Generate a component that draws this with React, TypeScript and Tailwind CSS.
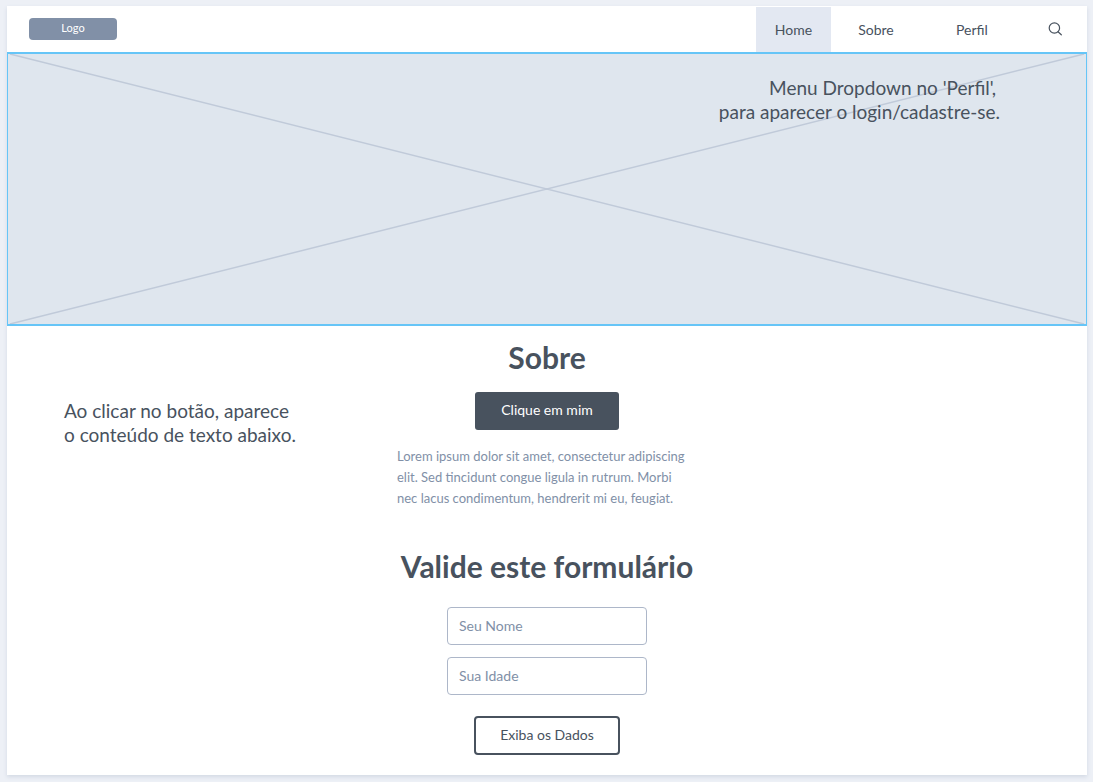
import type { ReactNode } from 'react';

function NavLink({ href, className, children }: { href: string; className: string; children: ReactNode }) {
  return (
    <a href={href} className={`flex items-center justify-center ${className}`}>
      {children}
    </a>
  );
}

function Header() {
  return (
    <header className="flex h-[46px] items-stretch justify-between">
      <a
        href="#home"
        className="mt-3 ml-[22px] flex h-[22px] w-[88px] items-center justify-center rounded bg-[#8190a7] pb-0.5 text-[11px] text-white"
      >
        Logo
      </a>
      <nav className="flex items-stretch pt-px text-sm">
        <NavLink href="#home" className="w-[75px] bg-[#e3e8f2]">Home</NavLink>
        <NavLink href="#sobre" className="w-[90px]">Sobre</NavLink>
        <NavLink href="#perfil" className="w-[102px]">Perfil</NavLink>
        <button type="button" aria-label="Buscar" className="flex w-16 items-center justify-center pb-0.5">
          <svg viewBox="0 0 14 14" className="h-3.5 w-3.5" fill="none" stroke="currentColor" strokeWidth="1.2" strokeLinecap="round">
            <circle cx="6.4" cy="6" r="5.2" />
            <path d="M10 9.8 13.3 12.8" />
          </svg>
        </button>
      </nav>
    </header>
  );
}

function Hero() {
  return (
    <section className="relative h-[274px] border-x border-y-2 border-[#66c5f7] bg-[#dfe6ee]">
      <svg
        className="absolute inset-0 h-full w-full"
        viewBox="0 0 1076 270"
        preserveAspectRatio="none"
        stroke="#c0cad9"
        strokeWidth="1.5"
        aria-hidden="true"
      >
        <path d="M2 0 1074 270M1074 0 2 270" />
      </svg>
      <p className="relative pt-[22px] pr-[86px] text-right text-[19px] leading-6">
        <span className="pr-1">Menu Dropdown no 'Perfil',</span>
        <br />
        para aparecer o login/cadastre-se.
      </p>
    </section>
  );
}

const field =
  'h-[38px] w-[200px] rounded border border-[#adb7c9] bg-white px-[11px] pb-0.5 text-sm placeholder:text-[#8190a7] placeholder:opacity-100';

export default function App() {
  return (
    <div className="min-h-screen bg-[#edf0f6] px-1.5 pt-1.5 pb-2 pl-[7px] font-['Lato',sans-serif] text-[#48525e]">
      <div className="bg-white pb-5 shadow-[0_2px_4px_#d3d9e4]">
        <Header />
        <Hero />
        <main>
          <section id="sobre" className="grid grid-cols-[1fr_300px_1fr]">
            <p className="pt-[73px] pl-[57px] text-[19px] leading-6 whitespace-nowrap">
              Ao clicar no botão, aparece
              <br />
              o conteúdo de texto abaixo.
            </p>
            <div className="flex flex-col items-center pt-[11px]">
              <h2 className="text-[30px] leading-10 font-bold">Sobre</h2>
              <button type="button" className="mt-[15px] h-[38px] w-36 rounded-[3px] bg-[#48525e] pb-0.5 text-sm text-white">
                Clique em mim
              </button>
              <p className="mt-4 w-full text-[13px] leading-[21px] text-[#8190a7]">
                Lorem ipsum dolor sit amet, consectetur adipiscing
                <br />
                elit. Sed tincidunt congue ligula in rutrum. Morbi
                <br />
                nec lacus condimentum, hendrerit mi eu, feugiat.
              </p>
            </div>
          </section>
          <form className="flex flex-col items-center pt-[37px]" onSubmit={(e) => e.preventDefault()}>
            <h2 className="text-[30px] leading-10 font-bold">Valide este formulário</h2>
            <input type="text" aria-label="Seu Nome" placeholder="Seu Nome" className={`mt-[21px] ${field}`} />
            <input type="text" aria-label="Sua Idade" placeholder="Sua Idade" className={`mt-3 ${field}`} />
            <button type="submit" className="mt-[21px] h-[39px] w-[146px] rounded border-2 border-[#48525e] bg-white pb-0.5 text-sm">
              Exiba os Dados
            </button>
          </form>
        </main>
      </div>
    </div>
  );
}
